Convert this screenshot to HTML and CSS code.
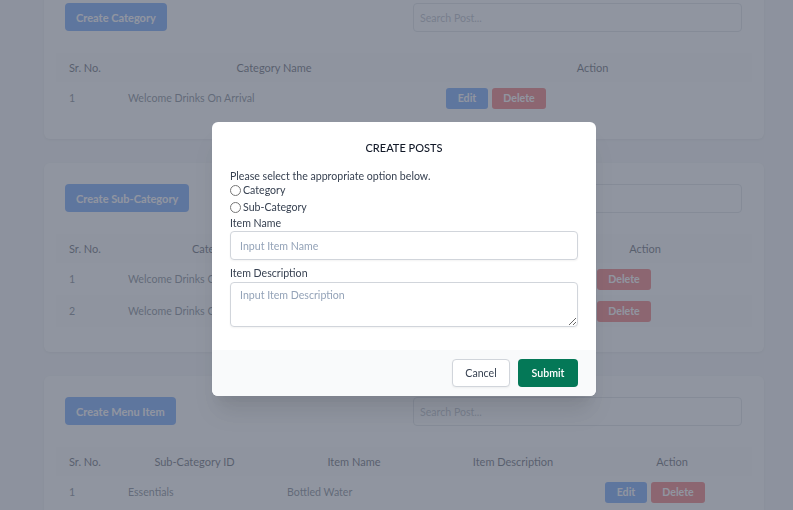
FILE: index.html
```html
<!DOCTYPE html>
<html lang="en">
<head>
<meta charset="utf-8">
<title>Create Posts</title>
<link rel="stylesheet" href="styles.css">
</head>
<body>
<main class="page">
  <section class="card">
    <div class="toolbar">
      <button class="btn btn-create">Create Category</button>
      <input class="search" type="text" placeholder="Search Post...">
    </div>
    <table class="tbl tbl-cat">
      <thead><tr><th class="c-sr">Sr. No.</th><th>Category Name</th><th>Action</th></tr></thead>
      <tbody>
        <tr><td class="c-sr">1</td><td>Welcome Drinks On Arrival</td><td><span class="act"><button class="btn-sm edit">Edit</button><button class="btn-sm del">Delete</button></span></td></tr>
      </tbody>
    </table>
  </section>

  <section class="card">
    <div class="toolbar">
      <button class="btn btn-create">Create Sub-Category</button>
      <input class="search" type="text" placeholder="Search Post...">
    </div>
    <table class="tbl tbl-sub">
      <thead><tr><th class="c-sr">Sr. No.</th><th>Category Name</th><th>Sub-Category Name</th><th>Action</th></tr></thead>
      <tbody>
        <tr><td class="c-sr">1</td><td>Welcome Drinks On Arrival</td><td>Essentials</td><td><span class="act"><button class="btn-sm edit">Edit</button><button class="btn-sm del">Delete</button></span></td></tr>
        <tr class="alt"><td class="c-sr">2</td><td>Welcome Drinks On Arrival</td><td>Mocktails</td><td><span class="act"><button class="btn-sm edit">Edit</button><button class="btn-sm del">Delete</button></span></td></tr>
      </tbody>
    </table>
  </section>

  <section class="card">
    <div class="toolbar">
      <button class="btn btn-create">Create Menu Item</button>
      <input class="search" type="text" placeholder="Search Post...">
    </div>
    <table class="tbl tbl-item">
      <thead><tr><th class="c-sr">Sr. No.</th><th>Sub-Category ID</th><th>Item Name</th><th>Item Description</th><th>Action</th></tr></thead>
      <tbody>
        <tr><td class="c-sr">1</td><td>Essentials</td><td>Bottled Water</td><td></td><td><span class="act"><button class="btn-sm edit">Edit</button><button class="btn-sm del">Delete</button></span></td></tr>
      </tbody>
    </table>
  </section>
</main>

<div class="overlay"></div>

<div class="modal">
  <div class="modal-body">
    <h2 class="modal-title">CREATE POSTS</h2>
    <p class="hint">Please select the appropriate option below.</p>
    <label class="radio r1"><input type="radio" name="kind"><span>Category</span></label>
    <label class="radio r2"><input type="radio" name="kind"><span>Sub-Category</span></label>
    <label class="field-label">Item Name</label>
    <input class="field" type="text" placeholder="Input Item Name">
    <label class="field-label l2">Item Description</label>
    <textarea class="field area" placeholder="Input Item Description"></textarea>
  </div>
  <div class="modal-foot">
    <button class="btn-cancel">Cancel</button>
    <button class="btn-submit">Submit</button>
  </div>
</div>
</body>
</html>
```
FILE: styles.css
```css
* { box-sizing: border-box; }
html, body { margin: 0; padding: 0; }
body {
  background: #f3f4f6;
  font-family: Lato, "Noto Sans", sans-serif;
  font-size: 10.6px;
  line-height: 16px;
  color: #1f2937;
  overflow: hidden;
  height: 510px;
}
.page {
  margin-top: -18px;
  padding-left: 44px;
  display: flex;
  flex-direction: column;
  gap: 24px;
}
.card {
  width: 720px;
  background: #fff;
  border-radius: 6px;
  box-shadow: 0 1px 3px rgba(0,0,0,0.1);
  padding: 21px 12px 25px;
}
.toolbar {
  display: flex;
  justify-content: space-between;
  align-items: flex-start;
  padding: 0 10px 0 9px;
  margin-bottom: 21px;
}
.btn {
  font-family: inherit;
  border: 0;
  border-radius: 4px;
  height: 28px;
  padding: 0 11px;
  font-size: 11px;
  font-weight: 700;
  color: #fff;
  background: #3b82f6;
}
.search {
  width: 329px;
  height: 29px;
  border: 1px solid #d1d5db;
  border-radius: 4px;
  padding: 0 6px;
  font-family: inherit;
  font-size: 10.6px;
  color: #6b7280;
}
.search::placeholder { color: #9ca3af; }
.tbl {
  width: 696px;
  border-collapse: collapse;
  table-layout: fixed;
}
.tbl th {
  background: #f9fafb;
  height: 29px;
  font-weight: 400;
  color: #1f2937;
  text-align: center;
  padding: 0 13px;
  font-size: 11px;
  white-space: nowrap;
}
.tbl td {
  height: 32px;
  padding: 0 13px;
  color: #4b5563;
  font-size: 10.6px;
  white-space: nowrap;
  overflow: hidden;
}
.tbl tr.alt td { background: #f9fafb; }
.tbl th.c-sr, .tbl td.c-sr { text-align: left; width: 59px; }
.tbl-cat th:nth-child(2) { width: 318px; }
.tbl-sub th:nth-child(2) { width: 229px; }
.tbl-sub th:nth-child(3) { width: 194px; }
.tbl-item th:nth-child(2) { width: 159px; }
.tbl-item th:nth-child(3) { width: 160px; }
.tbl-item th:nth-child(4) { width: 158px; }
.act { display: inline-flex; gap: 4px; vertical-align: middle; }
.btn-sm {
  font-family: inherit;
  border: 0;
  border-radius: 3px;
  height: 21px;
  font-size: 10.6px;
  font-weight: 700;
  color: #fff;
  padding: 0;
}
.btn-sm.edit { width: 42px; background: #3b82f6; }
.btn-sm.del { width: 54px; background: #ef4444; }

.overlay {
  position: fixed;
  inset: 0;
  background: rgba(107,114,128,0.75);
}
.modal {
  position: fixed;
  left: 212px;
  top: 122px;
  width: 384px;
  background: #fff;
  border-radius: 6px;
  overflow: hidden;
  box-shadow: 0 20px 25px -5px rgba(0,0,0,0.1), 0 10px 10px -5px rgba(0,0,0,0.04);
}
.modal-body {
  padding: 18px 18px 23px;
  display: flex;
  flex-direction: column;
  color: #374151;
}
.modal-title {
  margin: 0;
  text-align: center;
  font-size: 11px;
  font-weight: 500;
  line-height: 16px;
  color: #111827;
}
.hint { margin: 12px 0 0; line-height: 16px; }
.radio {
  display: flex;
  align-items: center;
  line-height: 16px;
}
.radio input {
  margin: 0 2px 0 0;
  width: 11px;
  height: 11px;
}
.r1 { margin-top: -2px; }
.r2 { margin-top: 1px; }
.field-label { line-height: 16px; }
.l2 { margin-top: 6px; margin-bottom: 2px; line-height: 14px; }
.field {
  font-family: inherit;
  font-size: 10.6px;
  width: 348px;
  height: 29px;
  border: 1px solid #d1d5db;
  border-radius: 4px;
  padding: 0 9px;
  box-shadow: 0 1px 2px rgba(0,0,0,0.05);
  color: #374151;
}
.field::placeholder { color: #94a3b8; }
.area {
  height: 45px;
  padding: 6px 9px;
  resize: vertical;
  display: block;
}
.modal-foot {
  background: #f9fafb;
  height: 46px;
  display: flex;
  justify-content: flex-end;
  align-items: center;
  gap: 8px;
  padding: 0 18px;
}
.btn-cancel, .btn-submit {
  font-family: inherit;
  font-size: 10.6px;
  height: 28px;
  border-radius: 4px;
}
.btn-cancel {
  width: 58px;
  background: #fff;
  border: 1px solid #d1d5db;
  color: #374151;
  box-shadow: 0 1px 2px rgba(0,0,0,0.05);
}
.btn-submit {
  width: 60px;
  background: #047857;
  border: 0;
  color: #fff;
  font-weight: 600;
}
```
